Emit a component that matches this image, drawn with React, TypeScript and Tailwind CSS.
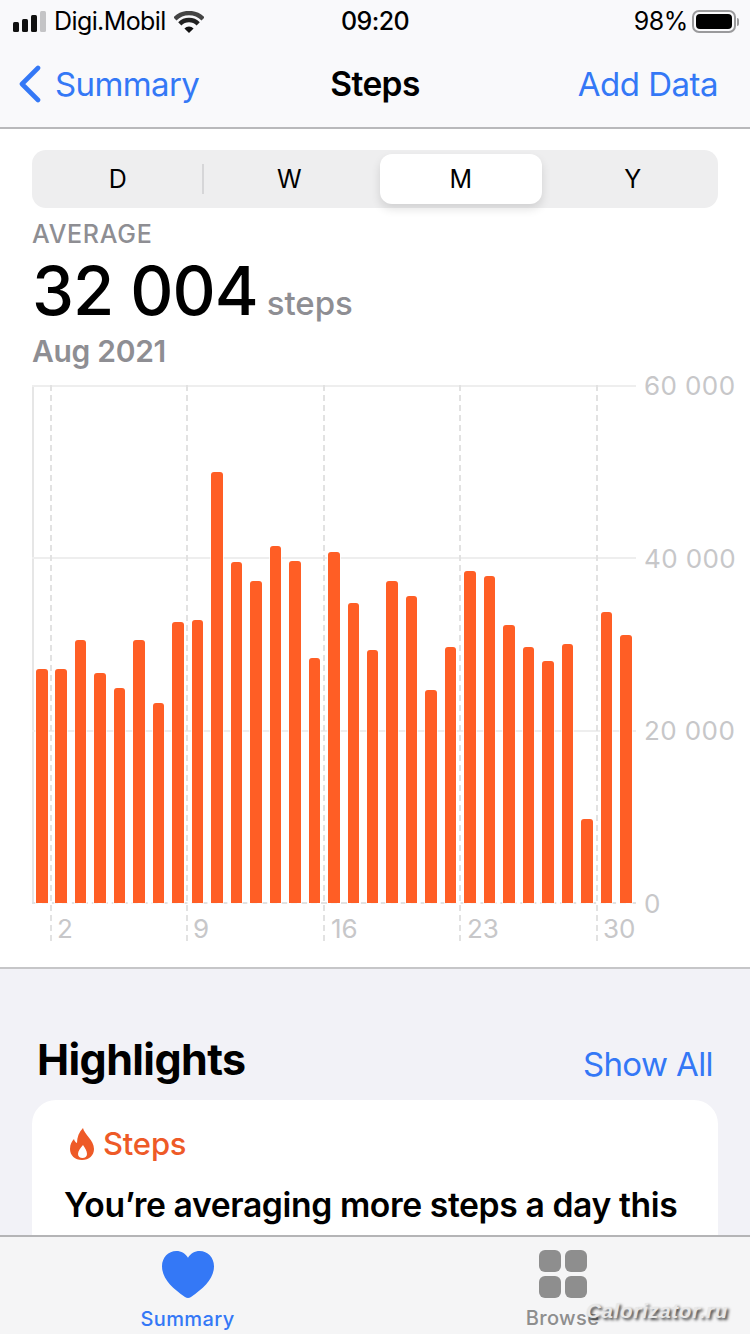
const stepBars = [669, 669, 640, 673, 688, 640, 703, 622, 620, 472, 562, 581, 546, 561, 658, 552, 603, 650, 581, 596, 690, 647, 571, 576, 625, 647, 661, 644, 819, 612, 635];

const yLabels = ["60 000", "40 000", "20 000", "0"];
const xLabels = ["2", "9", "16", "23", "30"];

function StatusBar() {
  return (
    <div className="flex h-[43px] items-center justify-between pl-[13px] pr-[11px] text-[25px] leading-none text-black">
      <div className="flex w-[260px] items-center">
        <svg width="34" height="21" viewBox="0 0 34 21" className="mr-[7px]">
          <rect x="0" y="11" width="6" height="10" rx="1.5" fill="#111" />
          <rect x="9" y="8" width="6" height="13" rx="1.5" fill="#111" />
          <rect x="18" y="4" width="6" height="17" rx="1.5" fill="#111" />
          <rect x="27" y="0" width="6" height="21" rx="1.5" fill="#c4c4c6" />
        </svg>
        <span className="tracking-[-0.6px]">Digi.Mobil</span>
        <svg width="30" height="22" viewBox="0 0 30 22" className="ml-[8px]">
          <path d="M.9 7.900A20 20 0 0 1 29.100 7.900" fill="none" stroke="#444" strokeWidth="4.500" />
          <path d="M5.800 12.800A13 13 0 0 1 24.200 12.800" fill="none" stroke="#222" strokeWidth="4.500" />
          <path d="M15 22 10.400 17.400A6.500 6.500 0 0 1 19.600 17.400Z" fill="#111" />
        </svg>
      </div>
      <span className="mr-[2px] font-medium tracking-[-0.6px]">09:20</span>
      <div className="flex w-[260px] items-center justify-end">
        <span className="mr-[4px] tracking-[-0.4px]">98%</span>
        <div className="flex items-center">
          <div className="flex h-[23px] w-[44px] items-center rounded-[7px] border-2 border-[#9a9a9c] p-[2px]">
            <div className="h-full w-[36px] rounded-[4px] bg-black" />
          </div>
          <div className="ml-[1px] h-[8px] w-[2px] rounded-r-sm bg-[#9a9a9c]" />
        </div>
      </div>
    </div>
  );
}

function NavBar() {
  return (
    <div className="flex h-[85px] items-start justify-between pl-[18px] pr-[32px] pt-[19px] text-[33px] leading-[44px] text-[#3478f6]">
      <div className="flex w-[267px] items-center">
        <svg width="24" height="38" viewBox="0 0 24 38" className="mr-[13px]">
          <path d="M20 3 4 19l16 16" fill="none" stroke="#3478f6" strokeWidth="4.600" strokeLinecap="round" strokeLinejoin="round" />
        </svg>
        <span className="tracking-[-0.6px]">Summary</span>
      </div>
      <span className="text-[33.5px] font-semibold tracking-[-0.6px] text-black">Steps</span>
      <span className="w-[253px] text-right tracking-[-0.5px]">Add Data</span>
    </div>
  );
}

function PeriodPicker() {
  return (
    <div className="mx-[32px] grid h-[58px] grid-cols-4 rounded-[14px] bg-[#eeeeef] text-[25px] text-black">
      <div className="flex items-center justify-center pt-[1px]">D</div>
      <div className="relative flex items-center justify-center pt-[1px]">
        <div className="absolute left-[-2px] top-[14px] h-[30px] w-[2px] bg-[#d6d6d8]" />
        W
      </div>
      <div className="my-[4px] ml-[5px] mr-[5px] flex items-center justify-center rounded-[12px] bg-white pt-[1px] shadow-[0_5px_10px_rgba(0,0,0,0.12)]">
        M
      </div>
      <div className="flex items-center justify-center pl-[1px] pt-[1px]">Y</div>
    </div>
  );
}

function StepsChart() {
  return (
    <div className="relative mx-[32px] mt-[16px] h-[556px] w-[703px]">
      {/* grid */}
      <div className="absolute left-0 top-0 h-[518px] w-[604px] border-l-2 border-[#e6e6e6]" />
      {[0, 172, 345].map((top) => (
        <div key={top} className="absolute left-0 h-[2px] w-[604px] bg-[#eeeeee]" style={{ top }} />
      ))}
      <div className="absolute left-0 top-[517px] h-0 w-[604px] border-t-2 border-dashed border-[#e2e2e2]" />
      {[18, 154, 291, 427, 564].map((left) => (
        <div key={left} className="absolute top-0 h-[556px] w-0 border-l-2 border-dashed border-[#e2e2e2]" style={{ left }} />
      ))}

      {/* bars */}
      <div className="absolute left-[4px] top-0 flex h-[518px] w-[596px] items-end justify-between">
        {stepBars.map((top, i) => (
          <div
            key={i}
            className="w-[11.5px] rounded-t-[3px] bg-[#ff5e25] shadow-[0_0_0_1px_rgba(255,255,255,0.7)]"
            style={{ height: 903 - top }}
          />
        ))}
      </div>

      {/* y axis */}
      <div className="absolute left-[612px] top-[-15px] flex h-[550px] flex-col justify-between whitespace-nowrap text-[26px] leading-[32px] tracking-[0.4px] text-[#c7c7c9]">
        {yLabels.map((label) => (
          <span key={label}>{label}</span>
        ))}
      </div>

      {/* x axis */}
      {xLabels.map((label, i) => (
        <span
          key={label}
          className="absolute top-[528px] text-[26px] leading-[32px] text-[#c7c7c9]"
          style={{ left: [25, 161, 299, 435, 571][i] }}
        >
          {label}
        </span>
      ))}
    </div>
  );
}

function TabBar() {
  return (
    <div className="absolute bottom-0 left-0 right-0 flex h-[99px] border-t-2 border-[#b4b4b6] bg-[#f5f5f6]">
      <div className="flex w-[375px] flex-col items-center">
        <svg width="52" height="48" viewBox="0 0 52 48" className="mt-[14px]">
          <path d="M26 47c-1 0-2-.4-3-1.100C10 37 0 27.500 0 15.200 0 6.500 6.400 0 14.300 0 19.300 0 23.500 2.500 26 6.800 28.500 2.500 32.700 0 37.700 0 45.600 0 52 6.500 52 15.200 52 27.500 42 37 29 45.900c-1 .7-2 1.100-3 1.100z" fill="#3478f6" />
        </svg>
        <span className="mt-[7px] text-[20px] leading-[26px] font-medium tracking-[0.4px] text-[#3478f6]">Summary</span>
      </div>
      <div className="flex w-[375px] flex-col items-center">
        <div className="mt-[13px] grid grid-cols-2 gap-[4px]">
          <div className="h-[22px] w-[22px] rounded-[6px] bg-[#8e8e8e]" />
          <div className="h-[22px] w-[22px] rounded-[6px] bg-[#8e8e8e]" />
          <div className="h-[22px] w-[22px] rounded-[6px] bg-[#8e8e8e]" />
          <div className="h-[22px] w-[22px] rounded-[6px] bg-[#8e8e8e]" />
        </div>
        <span className="mt-[7px] text-[20px] leading-[26px] font-medium tracking-[0.4px] text-[#8e8e8e]">Browse</span>
      </div>
      <span className="absolute left-[586px] top-[61px] font-['Liberation_Sans',sans-serif] text-[20.5px] leading-[26px] font-bold italic tracking-[0.7px] text-[#e8e8e8] [text-shadow:2px_2px_3px_rgba(0,0,0,0.75)]">
        Calorizator.ru
      </span>
    </div>
  );
}

export default function App() {
  return (
    <div className="relative h-[1334px] w-[750px] overflow-hidden bg-[#f2f2f7] font-['Inter','Noto_Sans',sans-serif]">
      <div className="h-[129px] border-b-2 border-[#b9b9bb] bg-[#f9f9fb]">
        <StatusBar />
        <NavBar />
      </div>

      <div className="h-[840px] border-b-2 border-[#c6c6c8] bg-white pt-[21px]">
        <PeriodPicker />
        <div className="ml-[32px] mt-[11px] text-[25px] leading-[30px] font-medium tracking-[0.7px] text-[#8e8e93]">AVERAGE</div>
        <div className="ml-[32px] mt-[8px] flex h-[71px] items-baseline leading-[68px]">
          <span className="text-[67px] font-medium tracking-[-1px] text-black">32 004</span>
          <span className="ml-[9px] text-[33px] font-medium tracking-[0px] text-[#8e8e93]">steps</span>
        </div>
        <div className="ml-[32px] mt-[5px] text-[30px] leading-[36px] font-semibold tracking-[-0.3px] text-[#8e8e93]">Aug 2021</div>
        <StepsChart />
      </div>

      <div className="ml-[37px] mr-[37px] mt-[63px] flex items-center justify-between">
        <span className="text-[43px] leading-[52px] font-bold tracking-[-0.6px] text-black">Highlights</span>
        <span className="pt-[10px] text-[33px] leading-[44px] tracking-[-0.6px] text-[#3478f6]">Show All</span>
      </div>

      <div className="mx-[32px] mt-[14px] h-[300px] rounded-[24px] bg-white pl-[32px] pr-[33px] pt-[26px]">
        <div className="flex items-center text-[#ee5a27]">
          <svg width="24" height="32" viewBox="0 0 24 32" className="ml-[6px] mr-[9px]">
            <path fillRule="evenodd" d="M13 0C14 6 24 12 24 21 24 27.500 19 32 12 32 5 32 0 27.500 0 21 0 16 2 13 4 11 4.500 13 5.500 14.500 7 15 7 9 9 4 13 0ZM13 17C10.500 20 8 23 8 26 8 28.500 10 30 12.500 30 15 30 17 28.500 17 26 17 23 15 20 13 17Z" fill="#ee5a27" />
          </svg>
          <span className="text-[31px] leading-[36px] font-medium tracking-[-0.2px]">Steps</span>
        </div>
        <p className="mt-[20px] w-[640px] text-[33.7px] leading-[46px] font-semibold tracking-[-0.4px] text-black">
          You’re averaging more steps a day this month.
        </p>
      </div>

      <TabBar />
    </div>
  );
}
